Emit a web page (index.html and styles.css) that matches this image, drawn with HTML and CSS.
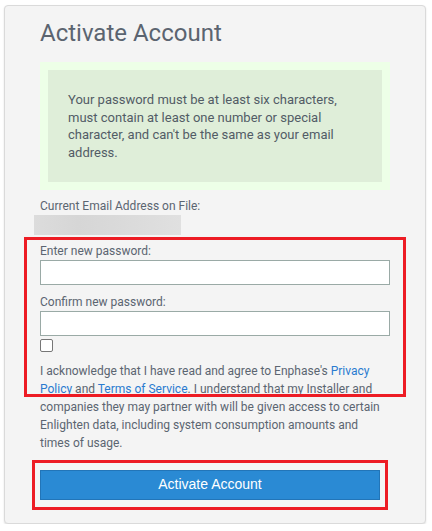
FILE: index.html
```html
<!DOCTYPE html>
<html lang="en">
<head>
<meta charset="utf-8">
<title>Activate Account</title>
<link rel="stylesheet" href="styles.css">
</head>
<body>
<div class="card">
  <h1 class="title">Activate Account</h1>
  <div class="notice">
    <div class="notice-body">Your password must be at least six characters, must contain at least one number or special character, and can't be the same as your email address.</div>
  </div>
  <div class="email-label">Current Email Address on File:</div>
  <div class="redacted"></div>
  <div class="form-section">
    <div class="highlight"></div>
    <label class="field-label first" for="pw1">Enter new password:</label>
    <input class="field" id="pw1" type="password">
    <label class="field-label second" for="pw2">Confirm new password:</label>
    <input class="field" id="pw2" type="password">
    <input class="check" type="checkbox" aria-label="I acknowledge">
    <p class="terms">I acknowledge that I have read and agree to Enphase's <a href="#">Privacy</a><br><a href="#">Policy</a> and <a href="#">Terms of Service</a>. I understand that my Installer and companies they may partner with will be given access to certain Enlighten data, including system consumption amounts and times of usage.</p>
  </div>
  <div class="button-frame">
    <button class="primary" type="button">Activate Account</button>
  </div>
</div>
</body>
</html>
```
FILE: styles.css
```css
html, body {
  margin: 0;
  padding: 0;
  background: #ffffff;
}

body {
  font-family: Roboto, "Liberation Sans", Arial, sans-serif;
  color: #5b6571;
}

.card {
  box-sizing: border-box;
  width: 422px;
  margin: 5px 0 0 4px;
  padding: 13px 35px 13px;
  background: #f4f4f4;
  border: 1px solid #dadada;
  border-radius: 4px;
  box-shadow: 0 1px 2px rgba(0, 0, 0, 0.12);
}

.title {
  margin: 0;
  font-size: 24px;
  line-height: 28px;
  font-weight: 400;
  color: #5b6470;
}

.notice {
  margin-top: 15px;
  padding: 8px;
  background: #edffe7;
}

.notice-body {
  padding: 21px 20px;
  background: #dfeed9;
  font-size: 13px;
  line-height: 17.5px;
  color: #525c66;
}

.email-label {
  margin-top: 8px;
  font-size: 12px;
  line-height: 17px;
}

.redacted {
  width: 147px;
  height: 20px;
  margin-left: -6px;
  background: linear-gradient(90deg, #dcdcdc 0%, #d6d6d6 30%, #dadada 60%, #e0e0e0 100%);
}

.form-section {
  position: relative;
}

.highlight {
  position: absolute;
  top: 2px;
  left: -16px;
  width: 382px;
  height: 160px;
  box-sizing: border-box;
  border: 3px solid #ed1c24;
  pointer-events: none;
}

.field-label {
  display: block;
  font-size: 12px;
  line-height: 18px;
}

.field-label.first {
  padding-top: 7px;
}

.field-label.second {
  margin-top: 8px;
}

.field {
  display: block;
  box-sizing: border-box;
  width: 350px;
  height: 25px;
  margin: 0;
  padding: 2px 6px;
  border: 1px solid #9aaaa6;
  border-radius: 0;
  background: #ffffff;
  outline: none;
}

.check {
  display: block;
  -webkit-appearance: none;
  appearance: none;
  box-sizing: border-box;
  width: 13px;
  height: 13px;
  margin: 3px 0 0 0;
  border: 1px solid #767676;
  border-radius: 2px;
  background: #ffffff;
}

.terms {
  margin: 10px 0 0 0;
  padding-right: 4px;
  font-size: 12px;
  line-height: 18px;
  color: #5b6571;
}

.terms a {
  color: #2a7bd0;
  text-decoration: none;
}

.button-frame {
  box-sizing: border-box;
  width: 356px;
  margin: 8px 0 0 -8px;
  padding: 7px 5px;
  border: 3px solid #ed1c24;
}

.primary {
  display: block;
  box-sizing: border-box;
  width: 340px;
  height: 30px;
  margin: 0;
  padding: 0 0 2px;
  border: 1px solid #2275b8;
  background: #2a8ad4;
  color: #ffffff;
  font-family: "Liberation Sans", Arial, sans-serif;
  font-size: 14px;
  cursor: pointer;
}
```
